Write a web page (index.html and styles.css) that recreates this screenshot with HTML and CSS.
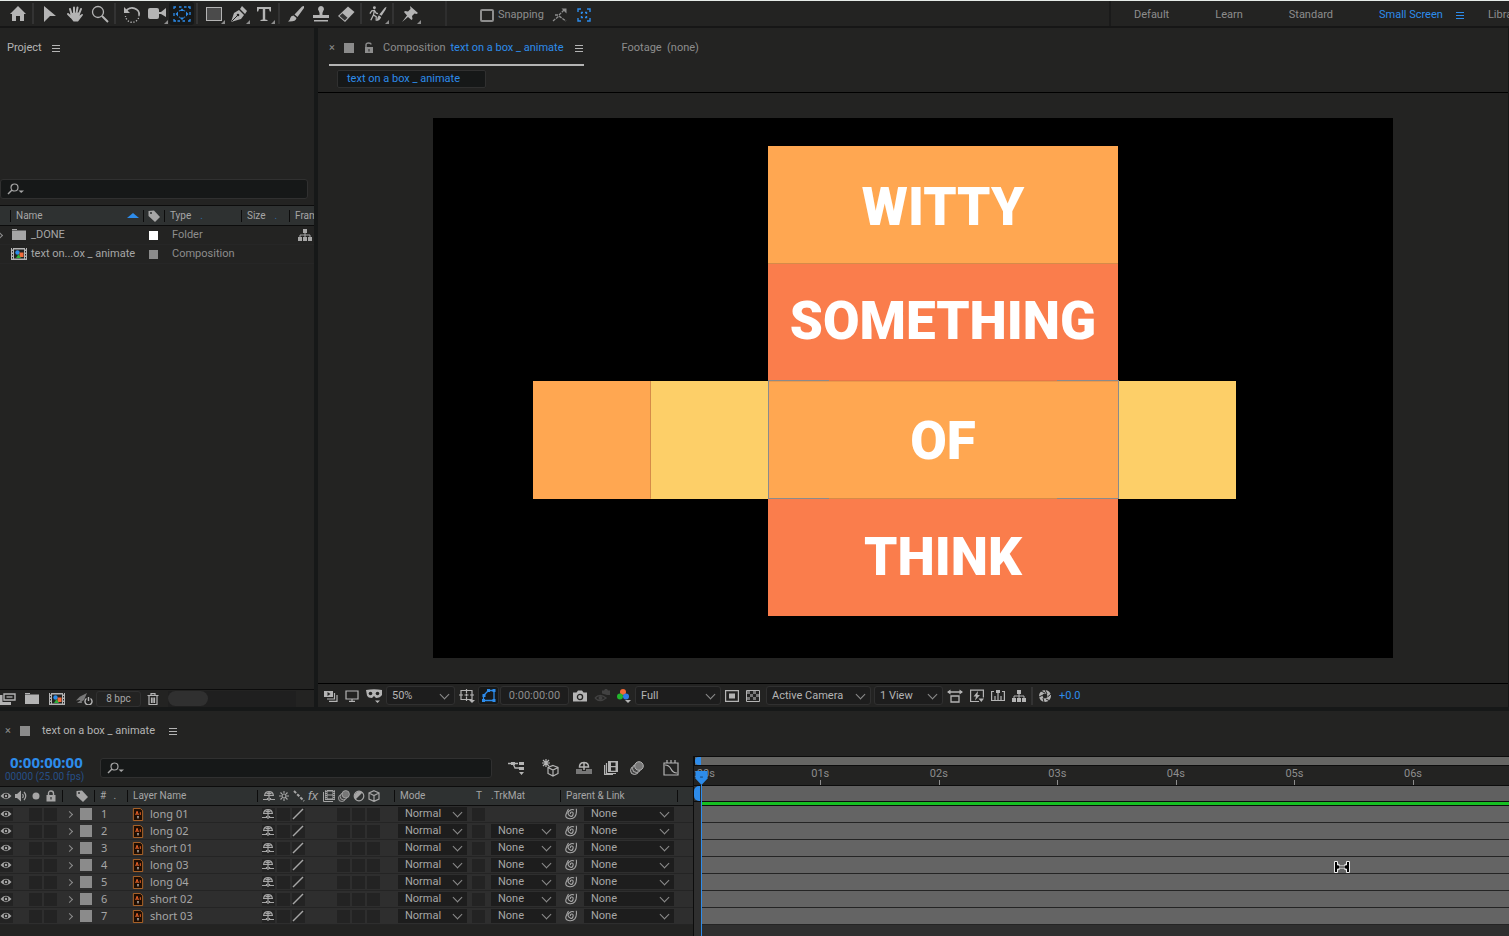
FILE: index.html
```html
<!DOCTYPE html>
<html lang="en">
<head>
<meta charset="utf-8">
<title>text on a box _ animate</title>
<link rel="stylesheet" href="styles.css">
</head>
<body>
<svg class="sprite" aria-hidden="true">
  <symbol id="i-home" viewBox="0 0 18 18"><path fill="currentColor" d="M9 1 17 9h-2v7h-4v-5H7v5H3V9H1z"/></symbol>
  <symbol id="i-arrow" viewBox="0 0 18 18"><path fill="currentColor" d="M3 1 15 11H9l-6 6z"/></symbol>
  <symbol id="i-hand" viewBox="0 0 18 18"><path fill="none" stroke="currentColor" stroke-width="2" stroke-linecap="round" d="M5.500 9 4 4M8 8V2.500M10.500 8l1-5.500M13 9l2-5M5 12 2 9"/><path fill="currentColor" d="M4.500 8 14 7.500l-.5 3L16 9q1.500 0 .8 1.200L12 16.500H7.500L4 12z"/></symbol>
  <symbol id="i-zoom" viewBox="0 0 18 18"><circle cx="7" cy="7" r="5.500" fill="none" stroke="currentColor" stroke-width="1.300"/><path stroke="currentColor" stroke-width="2" d="m11 11 6 6"/></symbol>
  <symbol id="i-rotate" viewBox="0 0 18 18"><path fill="none" stroke="currentColor" stroke-width="1.800" d="M3 6a7 6 0 0 1 13 4"/><path fill="currentColor" d="M1 2v6h6z"/><path fill="none" stroke="currentColor" stroke-width="1.300" stroke-dasharray="1.300 1.600" d="M16 10a6.500 6.500 0 0 1-13.500 1"/></symbol>
  <symbol id="i-camera" viewBox="0 0 18 18"><rect x="0" y="3" width="11" height="11" rx="2" fill="currentColor"/><path fill="currentColor" d="M11 7h2l5-4v9l-5-3h-2z"/></symbol>
  <symbol id="i-pan" viewBox="0 0 18 18"><path fill="none" stroke="currentColor" stroke-width="1.300" d="M1 4V2h2M6 2h2.500M11 2h2.500M15 2h2v2M17 7v3M17 14v2h-2M12 16H9.500M7 16H4.500M3 16H1v-2M1 11V8"/><path fill="currentColor" d="m9 3.500 2.500 2.500h-5zM9 15l2.500-2.500h-5zM2.500 9 5 6.500v5zM15.500 9 13 6.500v5zM5.500 6 7 5v1.500zM12.500 6 11 5v1.500zM5.500 12 7 13v-1.500zM12.500 12 11 13v-1.500z"/></symbol>
  <symbol id="i-rect" viewBox="0 0 18 18"><rect x="1.500" y="2.500" width="15" height="13" fill="#4b4b4b" stroke="currentColor"/></symbol>
  <symbol id="i-pen" viewBox="0 0 18 18"><path fill="currentColor" d="M1 17 4 8l5-3 5 5-3 4z"/><path fill="currentColor" d="m10 4 2-3 5 5-2 3z"/><path stroke="#232322" d="m1.500 16.500 6-6"/><circle cx="8" cy="10" r="1.300" fill="#232322"/></symbol>
  <symbol id="i-type" viewBox="0 0 18 18"><path fill="currentColor" d="M2 2h14v4.500h-1.200L14 4h-3.800v10.500l2.300.5v1H5.500v-1l2.300-.5V4H4l-.8 2.500H2z"/></symbol>
  <symbol id="i-brush" viewBox="0 0 18 18"><path fill="currentColor" d="M17 1v2l-6.500 9-3-2.500L15 1.500zM6.500 10.500l3 2.500q-.5 4-8.500 3.500 2-1 2.300-3.500.5-2.500 3.200-2.500"/></symbol>
  <symbol id="i-stamp" viewBox="0 0 18 18"><path fill="currentColor" d="M9 1a3 3 0 0 1 2.200 5Q10 8 10.500 10H17v3H1v-3h6.500Q8 8 6.800 6A3 3 0 0 1 9 1M2 15h14v1.500H2z"/></symbol>
  <symbol id="i-eraser" viewBox="0 0 18 18"><path fill="currentColor" d="m1 11 10-9.500 6.500 5.500-9.500 10z"/><path fill="#353535" d="m2.500 11 3-2.800 5 4.500L7.800 15.500z"/></symbol>
  <symbol id="i-roto" viewBox="0 0 20 18"><circle cx="6" cy="2" r="1.600" fill="currentColor"/><path fill="none" stroke="currentColor" stroke-width="1.400" d="M1 8.500 3 5.500l3-.5 2 3 2 .5M6 5l-1 5-3 6M5 10l3 2v4.500"/><path fill="currentColor" d="m19.500 1-1 3-4.500 7-2.500-1.500 6-7.500zM11 10.500l2.500 2q-1.500 4-5.500 4 1.500-2 1.500-4z"/></symbol>
  <symbol id="i-pin" viewBox="0 0 18 18"><path fill="currentColor" d="m9 1 8 7-1.500 1-2-.5L11 11l.5 3-1 1-3.500-3-6 5 5-6.500L3 7l1-1 3 .5L9.500 4z"/></symbol>
  <symbol id="i-snapa" viewBox="0 0 16 16"><path fill="none" stroke="currentColor" stroke-width="1.300" stroke-dasharray="3 1" d="m1 14 6-5 7 5M3 8h4l5-5"/><path fill="currentColor" d="M9.500 1.500h5v5z"/></symbol>
  <symbol id="i-snapb" viewBox="0 0 16 16"><path fill="none" stroke="currentColor" stroke-width="1.400" d="M2 5V2h3M11 2h3v3M14 11v3h-3M5 14H2v-3M5.500 7V5.500H7M9 5.500h1.500V7M10.500 9v1.500H9M7 10.500H5.500V9"/></symbol>
  <symbol id="i-menu" viewBox="0 0 9 9"><path stroke="currentColor" d="M0 1.500h8M0 4.500h8M0 7.500h8"/></symbol>
  <symbol id="i-unlock" viewBox="0 0 12 12"><path fill="currentColor" d="M2 5h8v6H2z"/><path fill="none" stroke="currentColor" stroke-width="1.400" d="M3 6V3q0-2 2.500-2T8 2.500"/><path stroke="#232322" d="M6 7v2.500"/></symbol>
  <symbol id="i-lock" viewBox="0 0 12 12"><path fill="currentColor" d="M1.500 5h9v6.500h-9z"/><path fill="none" stroke="currentColor" stroke-width="1.400" d="M3.500 6V3.500q0-2.500 2.500-2.500t2.500 2.500V6"/><path stroke="#2e3131" stroke-width="1.200" d="M6 7v2.500"/></symbol>
  <symbol id="i-search" viewBox="0 0 18 12"><circle cx="7.500" cy="4.500" r="3.500" fill="none" stroke="currentColor" stroke-width="1.200"/><path stroke="currentColor" stroke-width="1.500" d="m5 7-4 4"/><path fill="currentColor" d="M11.500 7.500H17L14.200 10z"/></symbol>
  <symbol id="i-tag" viewBox="0 0 12 12"><path fill="currentColor" d="M.5 1 6 .5l6 6.500-5 5L.5 6z"/><circle cx="3" cy="3" r="1" fill="#2e3131"/></symbol>
  <symbol id="i-folder" viewBox="0 0 14 12"><path fill="currentColor" d="M0 0h5v1H0zM0 1.500h14V11H0z"/></symbol>
  <symbol id="i-comp" viewBox="0 0 16 12"><path fill="#b4b4b4" d="M0 0h16v12H0z"/><path fill="#232322" d="M3 1.500h10v9H3z"/><path stroke="#232322" stroke-dasharray="1.500 1.500" d="M1.500 0v12M14.500 0v12"/><circle cx="6.500" cy="4.500" r="2.200" fill="#2d8ceb"/><path fill="#f26b3a" d="M8.500 4.500h4V9h-4z"/><path fill="#2fae3a" d="m5 10 2.500-4L10 10z"/></symbol>
  <symbol id="i-net" viewBox="0 0 14 12"><path fill="currentColor" d="M5 0h4v4H5zM0 8h4v4H0zM5 8h4v4H5zM10 8h4v4h-4z"/><path fill="none" stroke="currentColor" d="M7 4v4M2 8V6h10v2"/></symbol>
  <symbol id="i-interp" viewBox="0 0 16 12"><path fill="none" stroke="currentColor" stroke-width="1.400" d="M4 1h11v6H4z"/><path stroke="currentColor" stroke-width="1.300" d="M6.500 4h6"/><path fill="currentColor" d="M0 2h2.500v7H11v3H0z"/></symbol>
  <symbol id="i-rocket" viewBox="0 0 18 12"><path fill="#777" d="M12 0 9 7l-3 2-1-2-4 .5 4-4z"/><path fill="#777" d="m2 10 4-3 1 3z"/><path fill="none" stroke="currentColor" stroke-width="1.400" d="M11.500 5.500a3.500 3.500 0 1 0 4 0M13.500 4v4"/></symbol>
  <symbol id="i-trash" viewBox="0 0 12 12"><path fill="none" stroke="currentColor" stroke-width="1.200" d="M.5 2.500h11M4 2V.6h4V2M2 3v8.500h8V3M4.500 4.500V10M6 4.500V10M7.500 4.500V10"/></symbol>
  <symbol id="i-always" viewBox="0 0 14 12"><path fill="currentColor" d="M0 1h9v6H0z"/><path fill="#232322" d="m3.500 2 3 2-3 2z"/><path fill="none" stroke="currentColor" stroke-width="1.200" d="M10.500 3v6H3M13 5v6.400H5"/></symbol>
  <symbol id="i-monitor" viewBox="0 0 14 12"><path fill="none" stroke="currentColor" stroke-width="1.200" d="M1 1h12v8H1zM7 9v2M4 11.400h6"/></symbol>
  <symbol id="i-mask" viewBox="0 0 16 14"><path fill="currentColor" d="M0 1q8-1.500 16 0v5q-2 3-6 3L8 7 6 9Q2 9 1 6.500zM9 11.500h5L11.500 14z"/><circle cx="4.500" cy="4.500" r="1.800" fill="#232322"/><circle cx="11.500" cy="4.500" r="1.800" fill="#232322"/></symbol>
  <symbol id="i-grid" viewBox="0 0 16 14"><path fill="none" stroke="currentColor" stroke-width="1.200" d="M2 1.500h11v9H2zM7.500 0v4M7.500 8v4M0 6h4M5.500 6h4M11 6h4M7.500 4.500v3"/><path fill="currentColor" d="M10 11h6l-3 3z"/></symbol>
  <symbol id="i-roi" viewBox="0 0 16 14"><path fill="none" stroke="currentColor" stroke-width="1.300" d="M2.500 11.500v-5l5-5h5.500v10z"/><path fill="currentColor" d="M1 10h3v3H1zM1.500 5h3v3h-3zM6 0h3v3H6zM11.500 0h3v3h-3zM11.500 10h3v3h-3z"/></symbol>
  <symbol id="i-photo" viewBox="0 0 14 12"><path fill="currentColor" d="M0 2.500h3.500L5 .5h4l1.500 2H14v9H0z"/><circle cx="7" cy="7" r="2.600" fill="currentColor" stroke="#232322" stroke-width="1.300"/></symbol>
  <symbol id="i-showsnap" viewBox="0 0 16 14"><path fill="none" stroke="#414141" stroke-width="1.500" d="M1 9q5-5 11 0-6 5-11 0"/><circle cx="6.500" cy="9" r="2" fill="#414141"/><path fill="#414141" d="M8 1.500h2L11 0h2l1 1.500h2V6h-3L8 4.500z"/></symbol>
  <symbol id="i-rgb" viewBox="0 0 14 14"><circle cx="6" cy="3" r="3" fill="#f26a36"/><circle cx="3" cy="7.500" r="3" fill="#22b52c"/><circle cx="9" cy="7.500" r="3" fill="#2f7ae5"/><path fill="#b4b4b4" d="M8 11h6l-3 3z"/></symbol>
  <symbol id="i-fast" viewBox="0 0 14 12"><path fill="none" stroke="currentColor" stroke-width="1.200" d="M.6.600h12.800v10.800H.6z"/><path fill="currentColor" d="M4 3.500h6v5H4z"/></symbol>
  <symbol id="i-alpha" viewBox="0 0 14 12"><path fill="none" stroke="currentColor" d="M.5.500h13v11H.5z"/><path fill="#777" d="M1 1h3v3H1zM7 1h3v3H7zM4 4h3v3H4zM10 4h3v3h-3zM1 7h3v3H1zM7 7h3v3H7z"/></symbol>
  <symbol id="i-aspect" viewBox="0 0 16 13"><path fill="none" stroke="currentColor" stroke-width="1.300" d="M1 2.500h14M4 6.500h8v6H4z"/><path fill="currentColor" d="M0 2.500 3.500 0v5zM16 2.500 12.500 0v5z"/></symbol>
  <symbol id="i-bolt" viewBox="0 0 14 13"><path fill="none" stroke="currentColor" stroke-width="1.200" d="M9 12H.6V.600h12.800V8"/><path fill="currentColor" d="M8 1.500 3.500 7H6l-1 4 5-5.500H7.500zM8.500 9H14l-2.700 3.500z"/></symbol>
  <symbol id="i-flow" viewBox="0 0 14 12"><path fill="none" stroke="currentColor" stroke-width="1.200" d="M3 1.500H.6v9h12.800v-9H11M4 10V6M7 10V3M10 10V6"/><path fill="currentColor" d="M5 0h4v3H5z"/></symbol>
  <symbol id="i-shutter" viewBox="0 0 14 14"><circle cx="7" cy="7" r="4.200" fill="none" stroke="currentColor" stroke-width="3.600"/><path fill="none" stroke="#232322" d="m7 1 2 4M13 5 9.500 8M12 12l-4-2M6 13 5 9M1 8l4-2M3 2l4 2"/></symbol>
  <symbol id="i-eye" viewBox="0 0 12 12"><path fill="currentColor" d="M.5 6q5.500-6.500 11 0-5.500 6.500-11 0"/><circle cx="6" cy="6" r="2.400" fill="#232322"/><circle cx="6" cy="6" r="1.200" fill="currentColor"/></symbol>
  <symbol id="i-sound" viewBox="0 0 12 12"><path fill="currentColor" d="M0 4h2l4-3.500v11L2 8H0z"/><path fill="none" stroke="currentColor" stroke-width="1.200" d="M7.500 4q1.500 2 0 4M9 2q3.500 4 0 8"/></symbol>
  <symbol id="i-dot" viewBox="0 0 12 12"><circle cx="6" cy="6" r="3.500" fill="currentColor"/></symbol>
  <symbol id="i-shy" viewBox="0 0 12 12"><path fill="none" stroke="currentColor" stroke-width="1.200" d="M1.600 5.500Q2 1.600 6 1.600t4.400 3.900zM0 9.500h4.500V8M12 9.500H7.500V8M6 2v9M3.500 3.700h5"/></symbol>
  <symbol id="i-sun" viewBox="0 0 12 12"><circle cx="6" cy="6" r="2" fill="none" stroke="currentColor" stroke-width="1.200"/><path stroke="currentColor" stroke-width="1.100" d="M6 1v2M6 9v2M1 6h2M9 6h2M2.500 2.500 4 4M8 8l1.500 1.500M9.500 2.500 8 4M4 8 2.500 9.500"/></symbol>
  <symbol id="i-qual" viewBox="0 0 12 12"><path stroke="currentColor" stroke-width="2" stroke-dasharray="3 1.500" d="m1 1 10 10"/></symbol>
  <symbol id="i-slash" viewBox="0 0 12 12"><path stroke="currentColor" stroke-width="1.400" d="M1 11 11 1"/></symbol>
  <symbol id="i-film" viewBox="0 0 12 12"><path fill="currentColor" d="M2 0h10v10H2z"/><path fill="#2e3131" d="M4.500 1.500h5v3h-5zM4.500 5.500h5v3h-5z"/><path fill="none" stroke="currentColor" d="M.5 2v9.500H10"/><path stroke="#2e3131" stroke-dasharray="1 1" d="M3.200 0v10M10.800 0v10"/></symbol>
  <symbol id="i-blur" viewBox="0 0 14 14"><circle cx="4.500" cy="9.500" r="4" fill="#444" stroke="currentColor"/><circle cx="6.500" cy="7.500" r="4" fill="#444" stroke="currentColor"/><circle cx="9" cy="5" r="4.300" fill="#777" stroke="currentColor"/></symbol>
  <symbol id="i-adjust" viewBox="0 0 12 12"><circle cx="6" cy="6" r="4.800" fill="none" stroke="currentColor" stroke-width="1.200"/><path fill="currentColor" d="M2.500 9.500A5 5 0 0 1 9.500 2.500z"/></symbol>
  <symbol id="i-cube" viewBox="0 0 12 12"><path fill="none" stroke="currentColor" stroke-width="1.200" d="m6 .7 5 2.300v6L6 11.400 1 9V3zM1 3l5 2.500L11 3M6 5.500v6"/></symbol>
  <symbol id="i-tree" viewBox="0 0 16 14"><path fill="none" stroke="currentColor" stroke-width="1.300" d="M0 2.500h10M5 2.500 7 7h4"/><path fill="currentColor" d="M3 1h4v3H3zM11 1h5v3h-5zM11 6h5v3h-5zM11 11h5l-2.500 3z"/></symbol>
  <symbol id="i-draft" viewBox="0 0 18 18"><path fill="none" stroke="currentColor" stroke-width="1.200" d="m12 6.500 5 2v6L12 17l-5-2.500v-6zM7 8.500l5 2.500 5-2.500M12 11v6"/><path stroke="currentColor" stroke-width="1.200" d="M5 0v8M1 4h8M2 1l6 6M8 1 2 7"/></symbol>
  <symbol id="i-hide" viewBox="0 0 16 14"><path fill="none" stroke="currentColor" stroke-width="1.500" d="M3.500 6Q3.500 1.500 8 1.500T12.500 6zM8 2v7"/><path fill="#777" d="M0 8h6v2h4V8h6v5H0z"/></symbol>
  <symbol id="i-frames" viewBox="0 0 14 14"><path fill="currentColor" d="M4 0h10v11H4z"/><path fill="#232322" d="M7 1.500h4.500V5H7zM7 6.200h4.500v3.500H7z"/><path fill="none" stroke="currentColor" stroke-width="1.200" d="M2.500 2v10.500H12M.6 4v9.400H9"/></symbol>
  <symbol id="i-graph" viewBox="0 0 16 16"><path fill="none" stroke="currentColor" stroke-width="1.200" d="M1 3h14v12H1zM4 0v3M8 0v3M12 0v3M2 5q4 0 6 4t6 4"/></symbol>
  <symbol id="i-ai" viewBox="0 0 12 14"><path fill="#1e0d02" stroke="#b86a2a" d="M1 .5h7.500L11 3v10.500H1z"/><path fill="none" stroke="#f2662a" d="M3.500 7.500 5 3.500l1.500 4M4 6.500h2M8.500 4.500v3"/><path fill="#ddd" d="M5 9h2l-1 3z"/></symbol>
  <symbol id="i-whip" viewBox="0 0 12 12"><path fill="none" stroke="currentColor" stroke-width="1.100" d="M5.500 6Q5 4 6.800 4T8 6.500 5.500 8.200 3 5.500 6 1.700q2-.6 3 .3M11.300.8q.7 5.500-1.500 8t-6 1.700T1 6.500 3.500 1"/></symbol>
</svg>

<header class="toolbar">
  <nav class="tools" aria-label="Tools">
    <button class="tool" aria-label="Home"><svg><use href="#i-home"/></svg></button><i class="sep"></i>
    <button class="tool" aria-label="Selection"><svg><use href="#i-arrow"/></svg></button>
    <button class="tool" aria-label="Hand"><svg><use href="#i-hand"/></svg></button>
    <button class="tool" aria-label="Zoom"><svg><use href="#i-zoom"/></svg></button><i class="sep"></i>
    <button class="tool" aria-label="Rotate"><svg><use href="#i-rotate"/></svg></button>
    <button class="tool more" aria-label="Camera"><svg><use href="#i-camera"/></svg></button>
    <button class="tool active" aria-label="Pan behind"><svg><use href="#i-pan"/></svg></button><i class="sep"></i>
    <button class="tool more" aria-label="Rectangle"><svg><use href="#i-rect"/></svg></button>
    <button class="tool more" aria-label="Pen"><svg><use href="#i-pen"/></svg></button>
    <button class="tool more" aria-label="Type"><svg><use href="#i-type"/></svg></button><i class="sep"></i>
    <button class="tool" aria-label="Brush"><svg><use href="#i-brush"/></svg></button>
    <button class="tool" aria-label="Clone stamp"><svg><use href="#i-stamp"/></svg></button>
    <button class="tool" aria-label="Eraser"><svg><use href="#i-eraser"/></svg></button><i class="sep"></i>
    <button class="tool more" aria-label="Roto brush"><svg><use href="#i-roto"/></svg></button><i class="sep"></i>
    <button class="tool more" aria-label="Puppet pin"><svg><use href="#i-pin"/></svg></button>
  </nav>
  <div class="snap">
    <label><input type="checkbox">Snapping</label>
    <button aria-label="Snap edges"><svg class="s16"><use href="#i-snapa"/></svg></button>
    <button class="blue" aria-label="Snap features"><svg class="s16"><use href="#i-snapb"/></svg></button>
  </div>
  <nav class="spaces" aria-label="Workspaces">
    <a href="#">Default</a><a href="#">Learn</a><a href="#">Standard</a><a href="#" class="blue">Small Screen<svg class="s9"><use href="#i-menu"/></svg></a><a href="#">Libraries</a>
  </nav>
</header>

<main class="upper">
  <section class="project">
    <h2 class="ptab">Project <svg class="s9"><use href="#i-menu"/></svg></h2>
    <div class="search project-search"><svg><use href="#i-search"/></svg><input type="text" aria-label="Search project"></div>
    <table class="assets">
      <colgroup><col class="a1"><col class="a2"><col class="a3"><col class="a4"><col class="a5"><col class="a6"></colgroup>
      <thead><tr><th></th><th><div class="name-head">Name<i class="sort"></i></div></th><th><svg class="s12"><use href="#i-tag"/></svg></th><th>Type<b class="d1">.</b></th><th>Size<b class="d2">.</b></th><th>Frame</th></tr></thead>
      <tbody>
        <tr><td><i class="twirl"></i></td><td><div class="asset"><svg class="s14"><use href="#i-folder"/></svg>_DONE</div></td><td><i class="chip white"></i></td><td class="kind">Folder</td><td></td><td><svg class="s14"><use href="#i-net"/></svg></td></tr>
        <tr><td></td><td><div class="asset"><svg class="s16x12"><use href="#i-comp"/></svg>text on...ox _ animate</div></td><td><i class="chip"></i></td><td class="kind">Composition</td><td></td><td></td></tr>
      </tbody>
    </table>
    <footer class="project-foot">
      <button aria-label="Interpret footage"><svg class="s16x12"><use href="#i-interp"/></svg></button>
      <button aria-label="New folder"><svg class="s14"><use href="#i-folder"/></svg></button>
      <button aria-label="New composition"><svg class="s18x12"><use href="#i-comp"/></svg></button>
      <button aria-label="Project settings"><svg class="s18x12"><use href="#i-rocket"/></svg></button>
      <button class="bpc">8 bpc</button>
      <button aria-label="Delete"><svg class="s12"><use href="#i-trash"/></svg></button>
      <div class="scroll"><i></i></div>
    </footer>
  </section>

  <section class="comp">
    <div class="tabs">
      <div class="tab current"><button class="x" aria-label="Close">×</button><i class="chip big"></i><svg class="s12"><use href="#i-unlock"/></svg><span>Composition</span><a href="#" class="blue">text on a box _ animate</a><svg class="s9"><use href="#i-menu"/></svg></div>
      <div class="tab">Footage &nbsp;(none)</div>
    </div>
    <div class="crumbs"><button class="crumb">text on a box _ animate</button></div>
    <div class="viewer">
      <svg class="canvas" viewBox="0 0 960 540" role="img" aria-label="Composition preview">
        <path fill="#000" d="M0 0h960v540H0z"/>
        <g class="faces">
          <path fill="#ffa751" d="M335 28h350v117.500H335zM100 263h117.500v117.500H100zM335 263h350v117.500H335z"/>
          <path fill="#fa7d4c" d="M335 145.500h350V263H335zM335 380.500h350V498H335z"/>
          <path fill="#fdcf68" d="M217.500 263H335v117.500H217.500zM685 263h117.500v117.500H685z"/>
        </g>
        <path class="seams" d="M335 145.500h350M335 263h350M335 380.500h350M217.500 263v117.500"/>
        <path class="bounds" d="M396 262.500h-61v118h61M624 262.500h61v118h-61"/>
        <g class="words"><text x="510" y="107">WITTY</text><text x="510" y="221">SOMETHING</text><text x="510" y="341">OF</text><text x="510" y="457">THINK</text></g>
      </svg>
    </div>
    <footer class="comp-foot">
      <button aria-label="Always preview"><svg class="s14"><use href="#i-always"/></svg></button>
      <button aria-label="Primary viewer"><svg class="s14"><use href="#i-monitor"/></svg></button>
      <button aria-label="3D glasses"><svg class="s16x14"><use href="#i-mask"/></svg></button>
      <span class="pick w68"><select aria-label="Magnification"><option>50%</option></select></span>
      <button aria-label="Guides"><svg class="s16x14"><use href="#i-grid"/></svg></button>
      <button class="pressed blue" aria-label="Mask visibility"><svg class="s16x14"><use href="#i-roi"/></svg></button>
      <button class="time">0:00:00:00</button>
      <button aria-label="Snapshot"><svg class="s14"><use href="#i-photo"/></svg></button>
      <button aria-label="Show snapshot"><svg class="s16x14"><use href="#i-showsnap"/></svg></button>
      <button aria-label="Channels"><svg class="s14b"><use href="#i-rgb"/></svg></button>
      <span class="pick w86"><select aria-label="Resolution"><option>Full</option></select></span>
      <button aria-label="Region of interest"><svg class="s14"><use href="#i-fast"/></svg></button>
      <button aria-label="Transparency grid"><svg class="s14"><use href="#i-alpha"/></svg></button>
      <span class="pick w104"><select aria-label="View"><option>Active Camera</option></select></span>
      <span class="pick w68"><select aria-label="View layout"><option>1 View</option></select></span>
      <button aria-label="Pixel aspect"><svg class="s16x14"><use href="#i-aspect"/></svg></button>
      <button aria-label="Fast previews"><svg class="s14b"><use href="#i-bolt"/></svg></button>
      <button aria-label="Timeline"><svg class="s14"><use href="#i-flow"/></svg></button>
      <button aria-label="Flowchart"><svg class="s14"><use href="#i-net"/></svg></button><i class="sep"></i>
      <button aria-label="Reset exposure"><svg class="s14b"><use href="#i-shutter"/></svg></button>
      <a href="#" class="blue">+0.0</a>
    </footer>
  </section>
</main>

<section class="timeline">
  <div class="tltab"><button class="x" aria-label="Close">×</button><i class="chip big"></i><span>text on a box _ animate</span><svg class="s9"><use href="#i-menu"/></svg></div>
  <div class="layers">
    <div class="tlbar">
      <div class="clock"><strong>0:00:00:00</strong><span>00000 (25.00 fps)</span></div>
      <div class="search tl-search"><svg><use href="#i-search"/></svg><input type="text" aria-label="Search layers"></div>
      <div class="tlicons">
        <button aria-label="Mini-flowchart"><svg class="s16"><use href="#i-tree"/></svg></button>
        <button aria-label="Draft 3D"><svg class="s18"><use href="#i-draft"/></svg></button>
        <div class="trio">
          <button aria-label="Hide shy layers"><svg class="s16"><use href="#i-hide"/></svg></button>
          <button aria-label="Frame blending"><svg class="s14b"><use href="#i-frames"/></svg></button>
          <button aria-label="Motion blur"><svg class="s14b"><use href="#i-blur"/></svg></button>
        </div>
        <button aria-label="Graph editor"><svg class="s16"><use href="#i-graph"/></svg></button>
      </div>
    </div>
    <table class="stack">
      <colgroup><col class="c13"><col class="c15"><col class="c15"><col class="c19"><col class="c32"><col class="c33"><col class="c130"><col class="c19"><col class="c15"><col class="c15"><col class="c15"><col class="c15"><col class="c15"><col class="c15"><col class="c28"><col class="c77"><col class="c16"><col class="c73"><col class="c117"><col class="c16"></colgroup>
      <thead><tr>
        <th><svg class="s12"><use href="#i-eye"/></svg></th><th class="sw"><svg class="s12"><use href="#i-sound"/></svg></th><th class="sw"><svg class="s12"><use href="#i-dot"/></svg></th><th class="sw"><svg class="s12"><use href="#i-lock"/></svg></th>
        <th class="rule lab"><svg class="s12"><use href="#i-tag"/></svg></th><th class="rule num"># &nbsp; .</th><th class="rule txt">Layer Name</th>
        <th class="rule shy"><svg class="s12"><use href="#i-shy"/></svg></th><th class="sw"><svg class="s12"><use href="#i-sun"/></svg></th><th class="sw"><svg class="s12"><use href="#i-qual"/></svg></th><th class="sw"><em>fx</em></th><th class="sw"><svg class="s12"><use href="#i-film"/></svg></th><th class="sw"><svg class="s12"><use href="#i-blur"/></svg></th><th class="sw"><svg class="s12"><use href="#i-adjust"/></svg></th><th class="sw"><svg class="s12"><use href="#i-cube"/></svg></th>
        <th class="rule txt">Mode</th><th class="mid">T</th><th class="trk">.TrkMat</th><th class="rule txt">Parent &amp; Link</th><th class="rule"></th>
      </tr></thead>
      <tbody id="layers"></tbody>
    </table>
  </div>
  <div class="time-pane">
    <div class="navigator"><i></i></div>
    <div class="ruler"><span class="first">0:00s</span><span>01s</span><span>02s</span><span>03s</span><span>04s</span><span>05s</span><span>06s</span></div>
    <div class="workarea"><i></i></div>
    <div class="cache"></div>
    <div class="tracks" id="tracks"></div>
    <svg class="playhead" viewBox="0 0 13 15"><path fill="#2d8ceb" d="M0 0h13v8l-6.500 7L0 8z"/><path fill="none" stroke="#173b63" d="M5 6.500h3"/></svg>
    <i class="playline"></i>
    <svg class="cursor" viewBox="0 0 16 12"><path fill="#000" stroke="#eee" d="M.5.500h3v3.500L5 3v2h6V3l1.500 1V.500h3v11h-3V8L11 9V7H5v2L3.500 8v3.500h-3z"/></svg>
  </div>
</section>
<script src="script.js"></script>
</body>
</html>
```

FILE: styles.css
```css
* { box-sizing: border-box; }
html, body { height: 100%; }
body {
  margin: 0;
  display: grid;
  grid-template-rows: 27px 1fr 229px;
  background: #161818;
  border-top: 1px solid #e6ebe8;
  color: #a6a6a6;
  font: 11px/14px Roboto, "Noto Sans", sans-serif;
  overflow: hidden;
}
button, input, select { font: inherit; color: inherit; margin: 0; padding: 0; border: 0; background: none; }
button { display: flex; align-items: center; justify-content: center; flex: none; }
a { color: inherit; text-decoration: none; }
i { font-style: normal; flex: none; }
svg { display: block; flex: none; }
table { border-collapse: collapse; table-layout: fixed; }
th, td { padding: 0; text-align: left; font-weight: normal; }
.sprite { position: absolute; width: 0; height: 0; }
.blue { color: #2d8ceb; }
.s9 { width: 9px; height: 9px; }
.s12 { width: 12px; height: 12px; }
.s14 { width: 14px; height: 12px; }
.s14b { width: 14px; height: 14px; }
.s16 { width: 16px; height: 16px; }
.s18 { width: 18px; height: 18px; }
.s16x12 { width: 16px; height: 12px; }
.s16x14 { width: 16px; height: 14px; }
.s18x12 { width: 18px; height: 12px; }
.sep { width: 2px; height: 21px; background: #333; }

/* Toolbar */
.toolbar { display: flex; align-items: center; background: #232322; border-bottom: 2px solid #161616; overflow: hidden; color: #8d8d8d; }
.tools { display: flex; align-items: center; height: 100%; width: 447px; padding-left: 5px; border-right: 2px solid #2e2e2e; color: #b4b4b4; flex: none; }
.tool { position: relative; width: 25px; height: 23px; }
.tool svg { width: 18px; height: 18px; }
.tools .sep { margin: 0 3px 0 2px; }
.tool.more::after { content: ""; position: absolute; right: 1px; bottom: 1px; border: 2px solid; border-color: transparent #8d8d8d #8d8d8d transparent; }
.tool.active { color: #2d8ceb; background: #161818; border-radius: 3px; }
.snap { display: flex; align-items: center; gap: 8px; padding: 3px 0 0 33px; flex: 1; }
.snap label { display: flex; align-items: center; gap: 4px; }
.snap input { appearance: none; width: 14px; height: 13px; border: 2px solid #8d8d8d; border-radius: 2px; }
.spaces { display: flex; align-items: center; gap: 46px; width: 400px; height: 100%; padding: 3px 0 0 23px; border-left: 2px solid #1a1a1a; white-space: nowrap; flex: none; }
.spaces a { display: flex; align-items: center; gap: 13px; }
.spaces a.blue { margin-right: -23px; }

/* Panels */
.upper { display: grid; grid-template-columns: 314px 1fr; column-gap: 4px; min-height: 0; }
.project, .comp, .timeline { background: #232322; }
.project { display: flex; flex-direction: column; overflow: hidden; }
.ptab { display: flex; align-items: flex-start; gap: 10px; flex: 1 1 151px; max-height: 151px; margin: 0; padding: 13px 7px 0; font-size: 11px; font-weight: normal; line-height: 14px; color: #b4b4b4; }
.ptab svg { margin-top: 3px; }
.search { display: flex; align-items: center; height: 20px; padding-left: 6px; background: #161818; border: 1px solid #303030; border-radius: 3px; color: #a6a6a6; }
.search svg { width: 18px; height: 12px; }
.search input { flex: 1; min-width: 0; height: 16px; outline: 0; }
.project-search { flex: none; margin: 0 6px 6px 0; }
.assets { width: 314px; border-top: 1px solid #0c0c0c; }
.assets thead { background: #2e3131; border-bottom: 1px solid #0c0c0c; font-size: 10px; }
.assets th { height: 20px; padding-left: 6px; overflow: hidden; white-space: nowrap; }
.assets th + th, .rule { background: linear-gradient(#0c0c0c, #0c0c0c) 0 50% / 1px 12px no-repeat; }
.assets th:nth-child(3) { padding-left: 5px; }
.assets th b { color: #2d6aa8; font-weight: normal; }
.d1, .d2 { margin-left: 9px; }
.a1 { width: 10px; } .a2 { width: 133px; } .a3 { width: 21px; } .a4 { width: 77px; } .a5 { width: 48px; } .a6 { width: 25px; }
.name-head { display: flex; align-items: center; justify-content: space-between; padding-right: 4px; }
.sort { border: 6px solid transparent; border-top: 0; border-bottom: 5px solid #2d8ceb; }
.assets td { height: 19px; white-space: nowrap; border-bottom: 1px solid #262626; }
.assets td:last-child svg { margin-left: 9px; }
.asset { display: flex; align-items: center; gap: 4px; padding-left: 1px; }
.asset .s14 { margin: 0 1px; }
.kind { padding-left: 8px; color: #8d8d8d; }
.twirl { display: block; width: 5px; height: 5px; margin-left: -3px; border: 1px solid #8d8d8d; border-width: 1px 1px 0 0; transform: rotate(45deg); }
.chip { display: block; width: 9px; height: 9px; margin-left: 6px; background: #8b8b8b; }
.chip.white { background: #fff; }
.chip.big { width: 10px; height: 10px; margin: 0; }
.project-foot { display: flex; align-items: center; gap: 9px; height: 18px; margin-top: auto; border-top: 1px solid #0c0c0c; color: #b4b4b4; }
.bpc { width: 45px; height: 16px; margin: 0 -3px 0 -6px; border: 1px solid #303030; border-radius: 3px; font-size: 10px; color: #a6a6a6; }
.scroll { width: 128px; height: 16px; background: #1f1f1f; }
.scroll i { display: block; width: 40px; height: 15px; border-radius: 8px; background: #303030; }

.comp { display: flex; flex-direction: column; min-width: 0; border-right: 1px solid #161616; }
.tabs { display: flex; gap: 38px; padding-left: 11px; }
.tab { display: flex; align-items: center; height: 38px; border-bottom: 2px solid transparent; color: #8d8d8d; padding-top: 4px; }
.tab.current { border-color: #b4b4b4; }
.tab .s12 { margin: 0 8px 0 9px; }
.tab span { margin-right: 5px; }
.tab .s9 { margin-left: 11px; color: #b4b4b4; }
.x { width: 6px; margin-right: 9px; color: #8d8d8d; }
.crumbs { padding: 4px 19px; height: 27px; border-bottom: 1px solid #000; }
.crumb { width: 149px; height: 18px; padding-left: 9px; justify-content: flex-start; background: #161818; border: 1px solid #303030; border-radius: 2px; color: #2d8ceb; }
.viewer { flex: 1; min-height: 0; display: flex; align-items: center; justify-content: center; padding: 0 115px; }
.canvas { width: 100%; height: auto; max-height: 100%; }
.faces, .bounds { shape-rendering: crispEdges; }
.seams { stroke: #8a5a3a; stroke-opacity: .35; fill: none; }
.bounds { stroke: #8b8b8b; fill: none; }
.words { fill: #fff; font: 900 53px Roboto, "Noto Sans", sans-serif; text-anchor: middle; }
.comp-foot { display: flex; align-items: center; gap: 7px; height: 24px; padding-left: 6px; border-top: 1px solid #000; color: #b4b4b4; overflow: hidden; }
.comp-foot .sep { margin: 0 -2px; height: 18px; }
.comp-foot .pick, .time, .pressed { border: 1px solid #303030; border-radius: 3px; height: 19px; background: #1d1d1d; }
.comp-foot .pick { margin: 0 -3px; }
.comp-foot .w104 { margin: 0 -1px; }
.comp-foot .pick select { padding-left: 5px; }
.pressed { width: 21px; margin: 0 -6px 0 -4px; background: #161818; }
.time { width: 69px; margin-right: -3px; color: #8d8d8d; }
.pick { position: relative; display: flex; flex: none; background: #1d1d1d; }
.pick select { appearance: none; width: 100%; height: 100%; padding-left: 7px; outline: 0; }
.pick::after { content: ""; position: absolute; right: 6px; top: 50%; width: 6px; height: 6px; margin-top: -5px; border: solid #8d8d8d; border-width: 0 1px 1px 0; transform: rotate(45deg); pointer-events: none; }
.w68 { width: 69px; } .w86 { width: 86px; } .w104 { width: 105px; }

/* Timeline */
.timeline { display: grid; grid-template-columns: 693px 1fr; grid-template-rows: 45px 1fr; margin-top: 4px; }
.tltab { grid-column: 1 / 3; display: flex; align-items: center; height: 40px; padding-left: 5px; color: #b4b4b4; }
.tltab span { margin: 0 14px 0 12px; }
.tlbar { display: flex; height: 30px; }
.clock { width: 100px; padding-left: 5px; }
.clock strong { display: block; padding-left: 5px; font: bold 15px/14px "Noto Sans", sans-serif; color: #2d8ceb; margin-top: -1px; }
.clock span { display: block; font-size: 10px; line-height: 16px; color: #264f87; white-space: nowrap; }
.tl-search { width: 392px; margin-top: 2px; }
.tlicons, .trio { display: flex; align-items: center; gap: 17px; }
.tlicons { flex: 1; height: 24px; padding-left: 16px; color: #b4b4b4; }
.trio { gap: 12px; margin-right: 2px; }
.stack { width: 693px; border-top: 1px solid #0c0c0c; }
.stack thead { background: #2e3131; font-size: 10px; border-bottom: 1px solid #0c0c0c; }
.stack th { height: 19px; white-space: nowrap; }
.stack em { font: italic 13px/14px "Liberation Sans", sans-serif; }
.c13 { width: 13px; } .c15 { width: 15px; } .c16 { width: 16px; } .c19 { width: 19px; } .c28 { width: 28px; } .c32 { width: 32px; } .c33 { width: 33px; }
.c73 { width: 73px; } .c77 { width: 77px; } .c117 { width: 117px; } .c130 { width: 130px; }
.stack .sw { padding-left: 2px; }
.stack .lab { padding-left: 14px; }
.stack .num { padding-left: 6px; }
.stack .txt { padding-left: 6px; }
.stack .shy { padding-left: 6px; }
.stack .mid { padding-left: 5px; }
.stack .trk { padding-left: 4px; }
.stack tbody tr { height: 17px; background: #2e2e2e; border-bottom: 1px solid #242424; }
.box { display: flex; align-items: center; width: 13px; height: 13px; margin-left: 1px; background: #232323; }
.stack td:first-child .box { margin: 0; }
.label-cell { display: flex; align-items: center; gap: 8px; padding-left: 4px; }
.label-cell .twirl { margin: 0 0 0 1px; }
.label-cell .chip { width: 12px; height: 12px; margin: 0; }
.layer-name { display: flex; align-items: center; gap: 6px; padding-left: 5px; font: 11px/14px "Noto Sans", sans-serif; }
.layer-name svg { width: 12px; height: 13px; }
.stack .index { padding-left: 7px; font: 11px/14px "Noto Sans", sans-serif; }
.stack .first-switch { padding-left: 4px; }
.stack .pick { height: 14px; margin-left: 4px; }
.mode { width: 69px; } .matte { width: 65px; }
.parent { display: flex; align-items: center; padding-left: 5px; }
.parent .pick { width: 90px; margin-left: 7px; }

.time-pane { position: relative; display: flex; flex-direction: column; min-width: 0; overflow: hidden; background: #2f2f2f; border-left: 1px solid #0c0c0c; }
.navigator { height: 10px; border: 1px solid #0c0c0c; border-right: 0; background: #666664; }
.navigator i, .workarea i { display: block; height: 100%; width: 6px; background: #2d8ceb; border-radius: 5px 0 0 5px; }
.ruler { display: grid; grid-template-columns: 67px repeat(6, 100fr) 31fr; height: 19px; background: #232322; color: #8d8d8d; line-height: 16px; }
.ruler span { position: relative; text-align: center; }
.ruler .first { text-align: left; margin-left: -6px; }
.ruler span::after { content: ""; position: absolute; left: 50%; bottom: 0; width: 1px; height: 5px; background: #8d8d8d; }
.ruler .first::after { display: none; }
.workarea { height: 17px; border: solid #0c0c0c; border-width: 1px 0; background: linear-gradient(90deg, #2f2f2f 7px, #606060 7px); }
.cache { height: 4px; margin-left: 7px; background: #16bf22; border-bottom: 1px solid #0c0c0c; }
.track { height: 17px; margin-left: 7px; background: #646464; border-bottom: 1px solid #242424; }
.playhead { position: absolute; left: 1px; top: 15px; width: 13px; height: 14px; }
.playline { position: absolute; left: 7px; top: 29px; bottom: 0; width: 1px; background: #2d8ceb; }
.cursor { position: absolute; left: 640px; top: 105px; width: 16px; height: 12px; }
```

FILE: script.js
```js
const names = ["long 01", "long 02", "short 01", "long 03", "long 04", "short 02", "short 03"];

const icon = (id, size = "s12") => `<svg class="${size}"><use href="#i-${id}"/></svg>`;
const box = (id) => `<span class="box">${id ? icon(id) : ""}</span>`;
const pick = (cls, label, value) =>
  `<span class="pick ${cls}"><select aria-label="${label}"><option>${value}</option></select></span>`;

document.getElementById("layers").innerHTML = names.map((name, i) => `<tr>
  <td>${box("eye")}</td><td></td><td>${box()}</td><td>${box()}</td>
  <td><div class="label-cell"><i class="twirl"></i><i class="chip"></i></div></td>
  <td class="index">${i + 1}</td>
  <td><div class="layer-name">${icon("ai")}${name}</div></td>
  <td class="first-switch">${box("shy")}</td><td>${box()}</td><td>${box("slash")}</td>
  <td></td><td></td><td>${box()}</td><td>${box()}</td><td>${box()}</td>
  <td>${pick("mode", "Mode", "Normal")}</td><td>${box()}</td>
  <td>${i ? pick("matte", "Track matte", "None") : ""}</td>
  <td><div class="parent">${icon("whip")}${pick("", "Parent", "None")}</div></td><td></td></tr>`).join("");

document.getElementById("tracks").innerHTML = names.map(() => '<div class="track"></div>').join("");
```
